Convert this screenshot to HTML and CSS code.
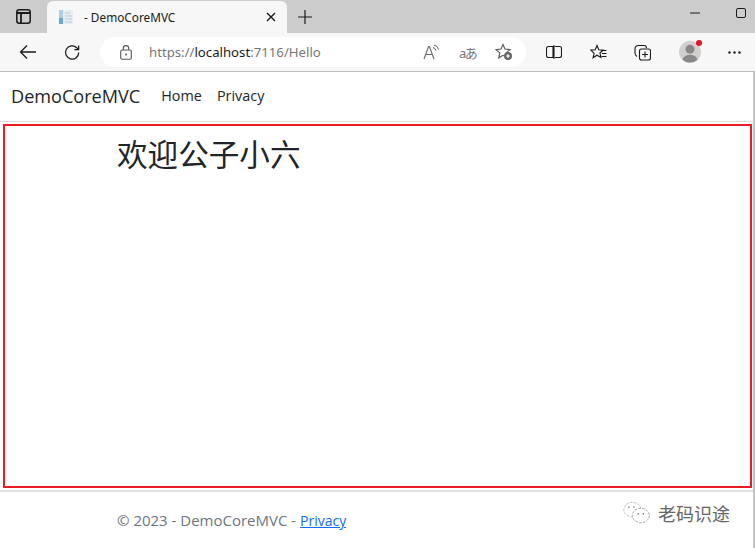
FILE: index.html
```html
<!DOCTYPE html>
<html lang="zh-CN">
<head>
    <meta charset="UTF-8">
    <title>DemoCoreMVC</title>
    <link rel="stylesheet" href="styles.css">
</head>
<body>
    <div class="tabstrip">
        <div class="tab-actions">
            <svg width="15" height="15" viewBox="0 0 15 15"><rect x="0.8" y="0.8" width="13.4" height="13.4" rx="2.5" fill="none" stroke="#1a1a1a" stroke-width="1.5"/><path d="M1 4h13M5 4v10" fill="none" stroke="#1a1a1a" stroke-width="1.8"/></svg>
        </div>
        <div class="tab">
            <svg class="favicon" width="16" height="16" viewBox="0 0 16 16"><rect x="1" y="1" width="4" height="14" fill="#a9cdea"/><rect x="1" y="9" width="4" height="6" fill="#6aa5d8"/><rect x="5" y="1" width="10" height="14" fill="#e9ecf0"/><path d="M7 4h5M7 7h7M7 10h7M7 13h7" stroke="#c3cad3" stroke-width="1"/></svg>
            <span class="tab-title">- DemoCoreMVC</span>
            <svg class="tab-close" width="10" height="10" viewBox="0 0 10 10"><path d="M1 1l8 8M9 1l-8 8" stroke="#1a1a1a" stroke-width="1.4"/></svg>
        </div>
        <svg class="new-tab" width="14" height="14" viewBox="0 0 14 14"><path d="M7 0v14M0 7h14" stroke="#1a1a1a" stroke-width="1.2"/></svg>
        <div class="window-btns">
            <svg width="10" height="2" viewBox="0 0 10 2"><path d="M0 1h10" stroke="#1a1a1a" stroke-width="1"/></svg>
            <svg width="10" height="10" viewBox="0 0 10 10"><rect x="0.5" y="0.5" width="9" height="9" rx="1.5" fill="none" stroke="#1a1a1a" stroke-width="1"/></svg>
        </div>
    </div>

    <div class="toolbar">
        <svg class="tool-back" width="18" height="16" viewBox="0 0 18 16"><path d="M17 8H1.5M8 1.5L1.5 8 8 14.5" fill="none" stroke="#1a1a1a" stroke-width="1.3"/></svg>
        <svg class="tool-reload" width="17" height="17" viewBox="0 0 18 18"><path d="M15.6 9a7 7 0 1 1-2.2-5.1L15.5 6M15.5 1.5V6H11" fill="none" stroke="#1a1a1a" stroke-width="1.3"/></svg>
        <div class="address">
            <svg class="lock" width="12" height="15" viewBox="0 0 12 15"><rect x="0.7" y="5" width="10.6" height="9.3" rx="1.6" fill="none" stroke="#555" stroke-width="1.1"/><path d="M3.3 5V3.3a2.7 2.7 0 0 1 5.4 0V5" fill="none" stroke="#555" stroke-width="1.1"/><circle cx="6" cy="9.6" r="1" fill="#555"/></svg>
            <span class="url">https://<b>localhost</b>:7116/Hello</span>
            <div class="address-icons">
                <svg width="17" height="16" viewBox="0 0 17 16"><path d="M1 15L5.6 2.5h.8L11 15M2.8 10.5h6.4" fill="none" stroke="#666" stroke-width="1.1"/><path d="M10 3.5a4 4 0 0 1 3 3M11 1a6 6 0 0 1 4.5 4.5" fill="none" stroke="#666" stroke-width="1"/></svg>
                <span class="translate">aあ</span>
                <svg width="18" height="18" viewBox="0 0 18 18"><path d="M8 1.5l2 4.6 5 .5-3.8 3.300 1.100 4.900L8 12.300l-4.300 2.500 1.100-4.900L1 6.600l5-.5z" fill="none" stroke="#555" stroke-width="1.1"/><circle cx="13" cy="13" r="4" fill="#666"/><path d="M13 11v4M11 13h4" stroke="#fff" stroke-width="1.1"/></svg>
            </div>
        </div>
        <div class="tool-icons">
            <svg width="16" height="14" viewBox="0 0 16 14"><path d="M7 1.5H2.5a2 2 0 0 0-2 2v7a2 2 0 0 0 2 2H7zM9 1.5h4.500a2 2 0 0 1 2 2v7a2 2 0 0 1-2 2H9M8 0v14" fill="none" stroke="#1a1a1a" stroke-width="1.1"/></svg>
            <svg width="17" height="17" viewBox="0 0 17 17"><path d="M7 1.5l1.800 4.200 4.400.4-3.300 2.900 1 4.400L7 11.200l-3.900 2.600 1-4.400L.8 6.100l4.400-.4z" fill="none" stroke="#1a1a1a" stroke-width="1.1"/><path d="M11.500 6.500H16.500M12 9.500h4.500M11.500 12.500h5" stroke="#1a1a1a" stroke-width="1"/></svg>
            <svg width="17" height="17" viewBox="0 0 17 17"><path d="M3 12.500C1.500 11.500 1 10 1 9V4.500A3 3 0 0 1 4 1.500h6a2.500 2.500 0 0 1 2.500 2.500" fill="none" stroke="#1a1a1a" stroke-width="1.1"/><rect x="5.5" y="5" width="11" height="11" rx="2" fill="#f7f7f7" stroke="#1a1a1a" stroke-width="1.1"/><path d="M11 7.500v6M8 10.500h6" stroke="#1a1a1a" stroke-width="1.1"/></svg>
            <div class="avatar">
                <svg width="22" height="22" viewBox="0 0 23 23"><circle cx="11.5" cy="11.5" r="11.5" fill="#d2d0ce"/><circle cx="11.5" cy="8.5" r="4.7" fill="#8a8886"/><path d="M3.700 19.500c1-3.500 4-5 7.800-5s6.800 1.500 7.800 5a11.500 11.500 0 0 1-15.600 0z" fill="#8a8886"/></svg>
                <span class="avatar-dot"></span>
            </div>
            <svg width="13" height="3" viewBox="0 0 13 3"><circle cx="1.5" cy="1.5" r="1.2" fill="#1a1a1a"/><circle cx="6.5" cy="1.5" r="1.2" fill="#1a1a1a"/><circle cx="11.5" cy="1.5" r="1.2" fill="#1a1a1a"/></svg>
        </div>
    </div>

    <div class="page">
        <nav class="navbar">
            <a class="brand" href="#">DemoCoreMVC</a>
            <a class="nav-link" href="#">Home</a>
            <a class="nav-link" href="#">Privacy</a>
        </nav>
        <main class="content">
            <h1 class="welcome">欢迎公子小六</h1>
        </main>
        <footer class="footer">
            <span>© 2023 - DemoCoreMVC - <a href="#">Privacy</a></span>
            <div class="watermark">
                <svg width="28" height="24" viewBox="0 0 33 28"><ellipse cx="11" cy="10" rx="10" ry="8.5" fill="none" stroke="#b5b5b5" stroke-width="1" stroke-dasharray="3 1.5"/><ellipse cx="21" cy="17" rx="10" ry="8.5" fill="#fff" stroke="#8f8f8f" stroke-width="1" stroke-dasharray="3 1.5"/><circle cx="7" cy="7" r="1.1" fill="#999"/><circle cx="13" cy="7" r="1.1" fill="#999"/><circle cx="18" cy="15" r="1" fill="#777"/><circle cx="24" cy="15" r="1" fill="#777"/></svg>
                <span>老码识途</span>
            </div>
        </footer>
    </div>
</body>
</html>
```

FILE: styles.css
```css
html, body {
    margin: 0;
    height: 100%;
    overflow: hidden;
}

body {
    width: 755px;
    height: 548px;
    display: flex;
    flex-direction: column;
    background: #fff;
    font-family: "Open Sans", "Noto Sans", "Noto Sans CJK SC", sans-serif;
    color: #212529;
}

svg {
    display: block;
    flex: none;
}

/* browser chrome */
.tabstrip {
    height: 33px;
    flex: none;
    display: flex;
    align-items: flex-end;
    background: #cccccc;
}

.tab-actions {
    width: 47px;
    height: 33px;
    display: flex;
    align-items: center;
    justify-content: center;
}

.tab {
    width: 240px;
    height: 32px;
    box-sizing: border-box;
    padding: 0 11px;
    display: flex;
    align-items: center;
    background: #f7f7f7;
    border-radius: 6px 6px 0 0;
}

.favicon {
    margin-right: 10px;
}

.tab-title {
    flex: 1;
    font-family: "Noto Sans", sans-serif;
    font-size: 11.8px;
    color: #1a1a1a;
}

.new-tab {
    margin: 0 0 9px 11px;
}

.window-btns {
    margin-left: auto;
    height: 26px;
    align-self: flex-start;
    display: flex;
    align-items: center;
    gap: 36px;
    padding-right: 9px;
}

.toolbar {
    height: 38px;
    flex: none;
    display: flex;
    align-items: center;
    background: #f7f7f7;
    border-bottom: 1px solid #bdbdbd;
}

.tool-back {
    margin-left: 19px;
}

.tool-reload {
    margin-left: 27px;
}

.address {
    width: 426px;
    height: 30px;
    box-sizing: border-box;
    margin-left: 19px;
    padding: 0 13px 0 20px;
    display: flex;
    align-items: center;
    background: #fff;
    border-radius: 15px;
}

.url {
    margin-left: 17px;
    font-family: "Noto Sans", sans-serif;
    font-size: 13.2px;
    color: #777;
}

.url b {
    font-weight: 400;
    color: #1a1a1a;
}

.address-icons {
    margin-left: auto;
    display: flex;
    align-items: center;
    gap: 19px;
}

.translate {
    width: 17px;
    font-family: "Noto Sans", "Noto Sans CJK JP", sans-serif;
    font-size: 13px;
    letter-spacing: -1.5px;
    white-space: nowrap;
    color: #777;
}

.tool-icons {
    flex: 1;
    display: flex;
    align-items: center;
    justify-content: space-between;
    padding: 0 14px 0 20px;
}

.avatar {
    position: relative;
}

.avatar-dot {
    position: absolute;
    top: -1px;
    right: -1px;
    width: 6px;
    height: 6px;
    border-radius: 50%;
    background: #e81123;
}

/* page */
.page {
    flex: 1;
    display: flex;
    flex-direction: column;
    min-height: 0;
    border-right: 2px solid #c4c4c4;
    background: #fff;
}

.navbar {
    height: 47px;
    flex: none;
    display: flex;
    align-items: center;
    padding: 0 0 2px 11px;
    border-bottom: 1px solid #dee2e6;
}

.navbar a {
    text-decoration: none;
    color: #212529;
}

.brand {
    font-size: 18.1px;
    margin-right: 21px;
}

.nav-link {
    font-size: 14.4px;
    margin-right: 15px;
}

.content {
    height: 364px;
    flex: none;
    box-sizing: border-box;
    margin: 2px 1px 2px 3px;
    padding: 8px 0 0 112px;
    border: 2px solid #ed1c24;
}

.welcome {
    margin: 0;
    font-size: 30.6px;
    font-weight: 400;
    line-height: 40px;
}

.footer {
    flex: 1;
    display: flex;
    align-items: center;
    justify-content: space-between;
    padding: 0 23px 0 117px;
    border-top: 2px solid #dee2e6;
    font-size: 15px;
    color: #6c757d;
}

.footer a {
    font-size: 14px;
    color: #0d6efd;
}

.watermark {
    display: flex;
    align-items: center;
    gap: 7px;
    margin-top: -14px;
    font-size: 18px;
    color: #666;
}
```
